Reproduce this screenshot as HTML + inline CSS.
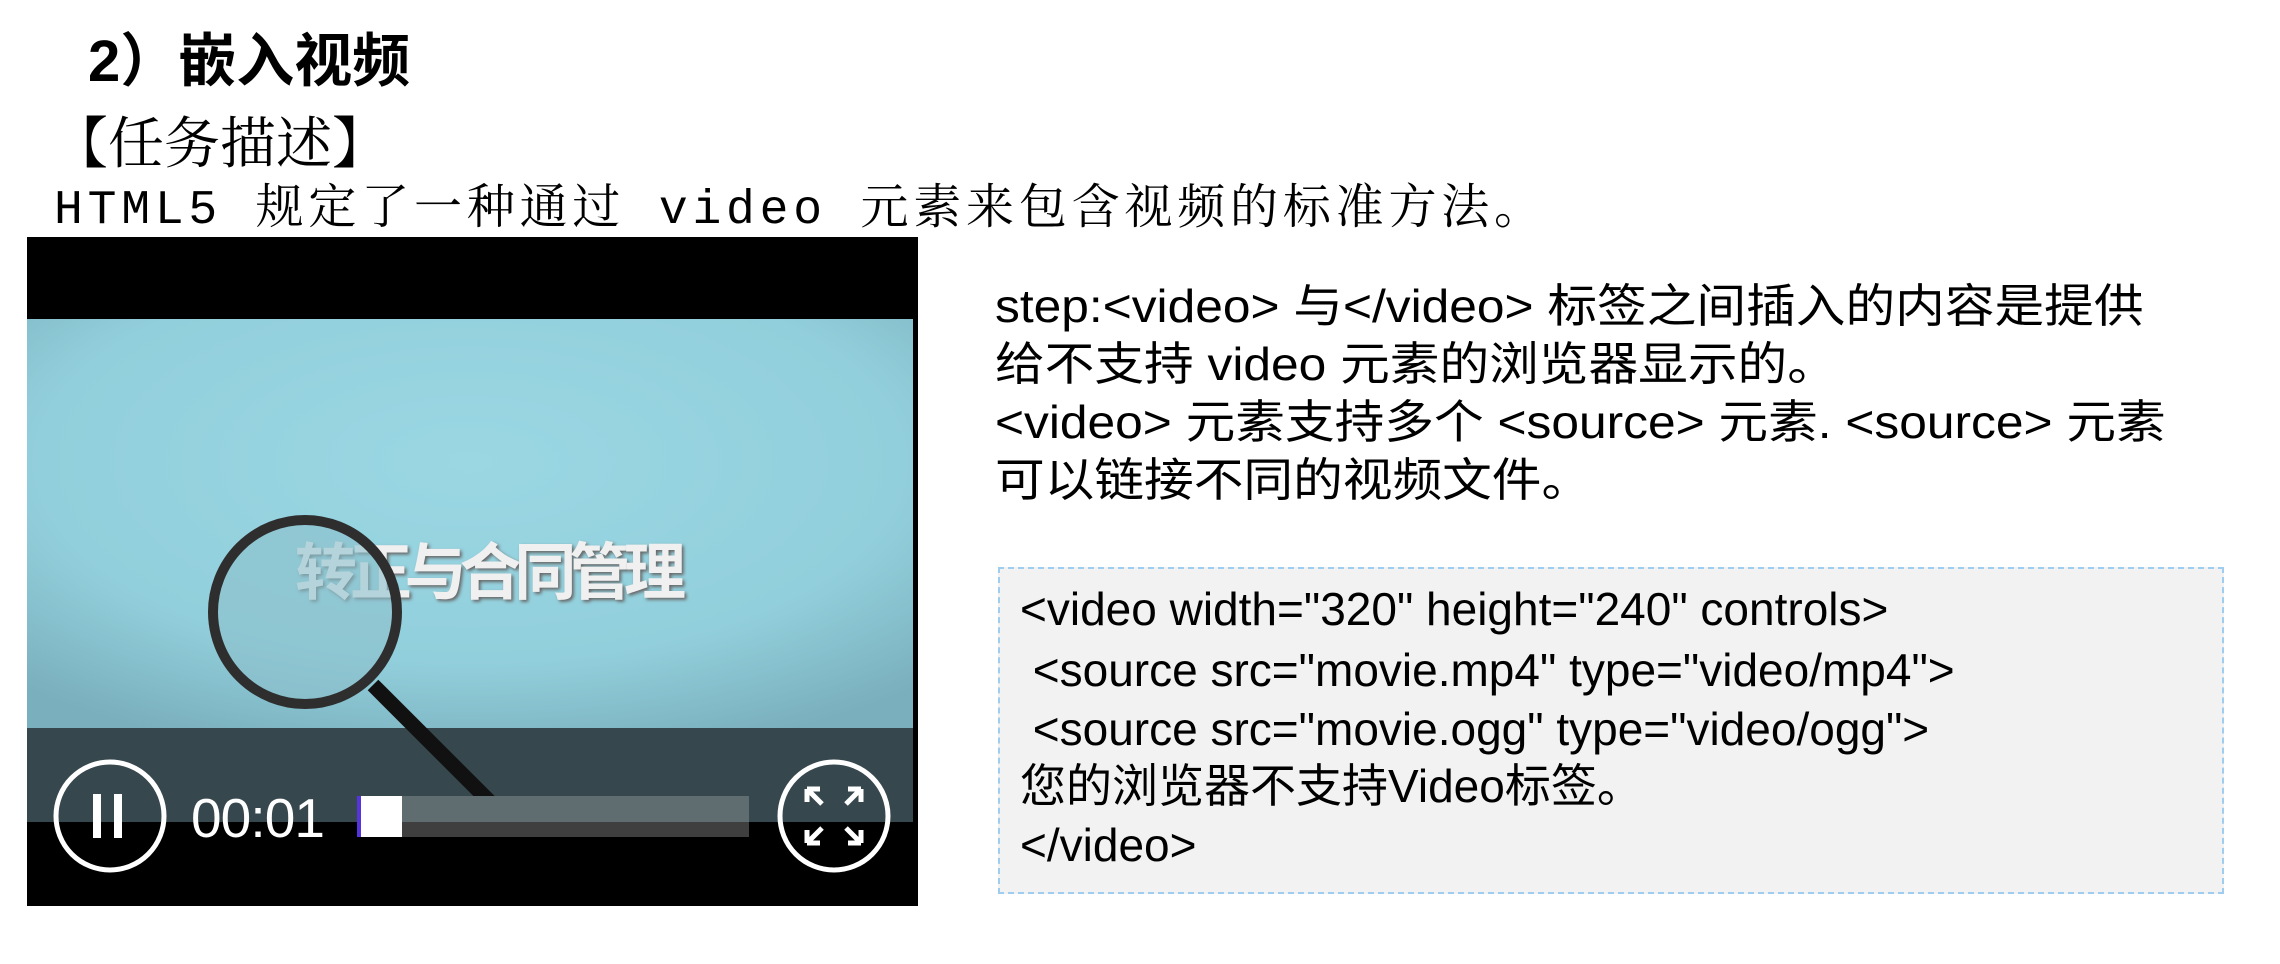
<!DOCTYPE html>
<html><head><meta charset="utf-8"><style>
html,body{margin:0;padding:0;background:#fff;width:2280px;height:964px;overflow:hidden;position:relative;font-family:"Liberation Sans","Noto Sans CJK SC",sans-serif;color:#000}
.a{position:absolute;white-space:nowrap}
.t{left:88px;top:14px;font-size:58px;font-weight:bold;font-family:"Liberation Sans","Noto Sans CJK SC",sans-serif}
.d{left:52px;top:100px;font-size:56px;font-family:"Noto Serif CJK SC","Liberation Serif",serif}
.h{left:54px;top:168px;font-size:48px;letter-spacing:4.8px;font-family:"Liberation Mono","Noto Serif CJK SC",monospace}
.r{left:995px;font-size:46px;line-height:58px;top:277px;transform:scaleX(1.08);transform-origin:0 0}
.box{left:998px;top:567px;width:1222px;height:323px;background:#f2f2f2;border:2px dashed #9fcdef}
.c{left:1020px;font-size:46px;line-height:50px;transform:scaleX(1.0);transform-origin:0 0}
</style></head><body>
<div class="a t">2）嵌入视频</div>
<div class="a d">【任务描述】</div>
<div class="a h">HTML5 规定了一种通过 video 元素来包含视频的标准方法。</div>

<svg class="a" style="left:0;top:0" width="2280" height="964" viewBox="0 0 2280 964">
<defs>
<radialGradient id="g" cx="0.5" cy="0.35" r="0.75">
<stop offset="0" stop-color="#9ad7e3"/><stop offset="0.65" stop-color="#92cfdc"/><stop offset="1" stop-color="#7aafbd"/>
</radialGradient>
</defs>
<rect x="27" y="237" width="891" height="669" fill="#000"/>
<rect x="27" y="319" width="886" height="409" fill="url(#g)"/>
<rect x="27" y="728" width="886" height="94" fill="#36474d"/>
<text x="295" y="594" font-size="62" font-weight="bold" fill="#f0f0f0" font-family="Noto Sans CJK SC,sans-serif" textLength="391" style="text-shadow:2px 2px 3px #666">转正与合同管理</text>
<circle cx="305" cy="612" r="92" fill="#8cc0cc" fill-opacity="0.6" stroke="#2e2e2e" stroke-width="10"/>
<line x1="373" y1="685" x2="504" y2="816" stroke="#111" stroke-width="15"/>
<rect x="357" y="796" width="392" height="26" fill="#5f6c70"/>
<rect x="357" y="822" width="392" height="15" fill="#3f3f3f"/>
<rect x="357" y="796" width="4" height="41" fill="#5533dd"/>
<rect x="361" y="796" width="41" height="41" fill="#fff"/>
<circle cx="110" cy="816" r="54" fill="none" stroke="#fff" stroke-width="5"/>
<rect x="93" y="794" width="8" height="44" fill="#fff"/>
<rect x="114" y="794" width="8" height="44" fill="#fff"/>
<text x="191" y="837" font-size="55" fill="#fff" textLength="134" font-family="Liberation Sans,sans-serif">00:01</text>
<circle cx="834" cy="816" r="54" fill="none" stroke="#fff" stroke-width="5"/>
<g stroke="#fff" stroke-width="5" fill="none">
<path d="M807 789 L822 804 M807 789 h13 M807 789 v13"/>
<path d="M861 789 L846 804 M861 789 h-13 M861 789 v13"/>
<path d="M807 843 L822 828 M807 843 h13 M807 843 v-13"/>
<path d="M861 843 L846 828 M861 843 h-13 M861 843 v-13"/>
</g>
</svg>

<div class="a r">step:&lt;video&gt; 与&lt;/video&gt; 标签之间插入的内容是提供<br>给不支持 video 元素的浏览器显示的。<br>&lt;video&gt; 元素支持多个 &lt;source&gt; 元素. &lt;source&gt; 元素<br>可以链接不同的视频文件。</div>

<div class="a box"></div>
<div class="a c" style="top:584px">&lt;video width="320" height="240" controls&gt;</div>
<div class="a c" style="top:645px">&nbsp;&lt;source src="movie.mp4" type="video/mp4"&gt;</div>
<div class="a c" style="top:704px">&nbsp;&lt;source src="movie.ogg" type="video/ogg"&gt;</div>
<div class="a c" style="top:761px">您的浏览器不支持Video标签。</div>
<div class="a c" style="top:820px">&lt;/video&gt;</div>
</body></html>
